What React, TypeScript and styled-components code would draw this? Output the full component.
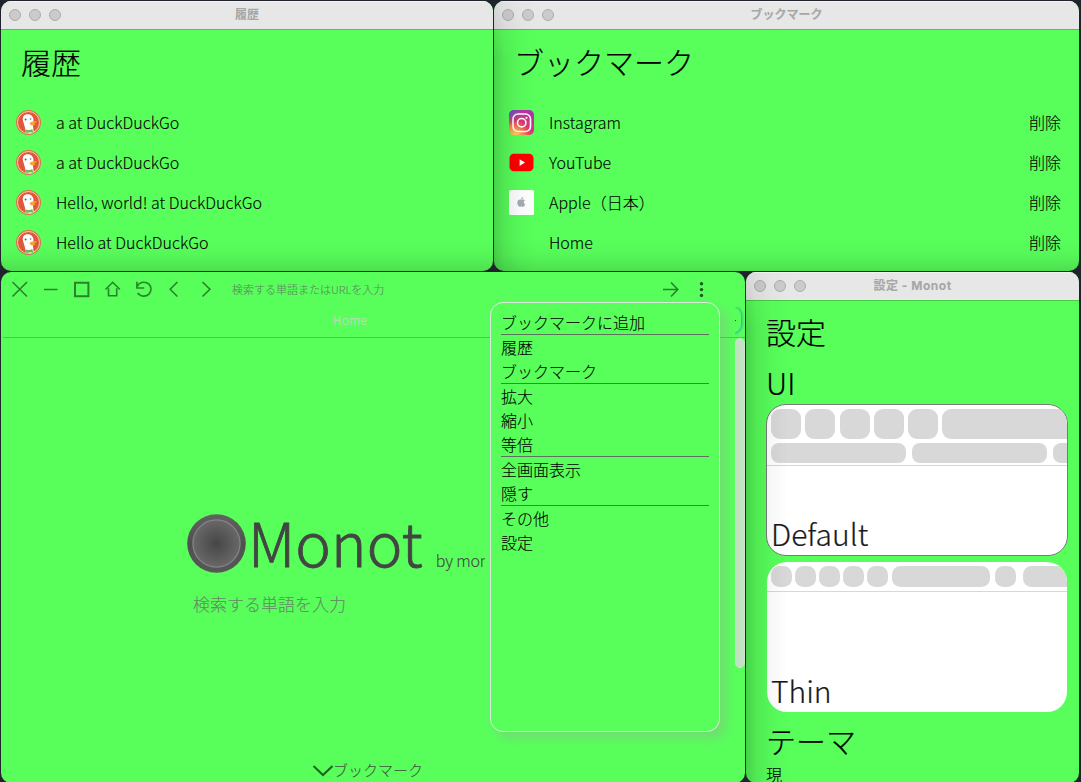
import React from 'react';
import styled, { createGlobalStyle, css } from 'styled-components';

const GREEN = '#58ff5b';

const GlobalStyle = createGlobalStyle`
  *, *::before, *::after { box-sizing: border-box; }
  html, body { margin: 0; padding: 0; }
  body {
    width: 1081px;
    height: 782px;
    overflow: hidden;
    background: #20222c;
    color: #000;
    font-family: "Noto Sans CJK JP", sans-serif;
    font-weight: 300;
    -webkit-text-stroke: 0.1px currentColor;
  }
`;

const Desktop = styled.div`
  width: 1081px;
  height: 782px;
  padding: 1px 2px 0 1px;
  display: flex;
  flex-direction: column;
  gap: 1px;
  overflow: hidden;
`;

const DesktopRow = styled.div<{ $height: number }>`
  display: flex;
  flex: none;
  gap: 1px;
  height: ${(p) => p.$height}px;
`;

const Window = styled.section<{ $width: number; $shade?: 'left' | 'bottom' | 'both' }>`
  flex: none;
  width: ${(p) => p.$width}px;
  height: 100%;
  display: flex;
  flex-direction: column;
  overflow: hidden;
  border-radius: 10px;
  background: ${GREEN};
  position: relative;

  &::after {
    content: '';
    position: absolute;
    inset: 0;
    pointer-events: none;
    background:
      ${(p) => p.$shade === 'bottom' || p.$shade === 'both'
        ? 'linear-gradient(to top, rgba(0,0,0,0.12), rgba(0,0,0,0.03) 16px, transparent 32px)'
        : 'linear-gradient(transparent, transparent)'},
      ${(p) => p.$shade === 'left' || p.$shade === 'both'
        ? 'linear-gradient(to right, rgba(0,0,0,0.18), rgba(0,0,0,0.09) 10px, rgba(0,0,0,0.03) 24px, transparent 42px)'
        : 'linear-gradient(transparent, transparent)'};
    -webkit-mask-image: ${(p) => (p.$shade === 'left' || p.$shade === 'both'
      ? 'linear-gradient(to bottom, rgba(0,0,0,0.3), #000 60px)'
      : 'none')};
  }
`;

const TitleBar = styled.header`
  flex: none;
  height: 29px;
  display: grid;
  grid-template-columns: 68px 1fr 68px;
  align-items: center;
  padding-bottom: 1px;
  background: #e7e7e7;
  border-top: 1px solid #f4f4f4;
  border-bottom: 1px solid #45cb45;
`;

const Lights = styled.div`
  display: flex;
  gap: 8px;
  padding-left: 8px;
`;

const Light = styled.span`
  width: 12px;
  height: 12px;
  border-radius: 50%;
  background: #cbcbcb;
  border: 1px solid #adadad;
`;

const WindowTitle = styled.div<{ $spacing?: number }>`
  text-align: center;
  font-family: Inter, "Noto Sans CJK JP", sans-serif;
  font-size: 12px;
  line-height: 20px;
  font-weight: 700;
  letter-spacing: ${(p) => p.$spacing ?? 0}px;
  color: #a6a8a8;
`;

const PageTitle = styled.h1<{ $indent: number }>`
  flex: none;
  margin: 8px 0 18px;
  padding-left: ${(p) => p.$indent}px;
  font-size: 30px;
  line-height: 46px;
  font-weight: 300;
  -webkit-text-stroke: 0.2px currentColor;
`;

const SiteRow = styled.div`
  flex: none;
  height: 40px;
  padding: 0 18px 0 15px;
  display: flex;
  align-items: center;
  font-size: 16px;
  line-height: 24px;
`;

const SiteIcon = styled.span`
  flex: none;
  width: 25px;
  height: 25px;
  margin-right: 15px;

  svg { display: block; width: 25px; height: 25px; }
`;

const SiteName = styled.span`
  flex: 1;
  white-space: nowrap;
`;

const DeleteButton = styled.button`
  border: 0;
  padding: 0;
  background: none;
  font: inherit;
  color: inherit;
`;

const Toolbar = styled.div`
  flex: none;
  height: 34px;
  display: flex;
  align-items: center;
  padding-left: 7px;
`;

const ToolButton = styled.button`
  flex: none;
  width: 31px;
  height: 22px;
  padding: 0;
  border: 0;
  background: none;
  color: #2a822a;

  svg { display: block; width: 22px; height: 22px; }
`;

const AddressField = styled.div`
  width: 434px;
  padding-left: 7px;
  font-size: 11px;
  line-height: 16px;
  color: #5b8a5b;
`;

const TabStrip = styled.div`
  flex: none;
  height: 32px;
  margin-left: 2px;
  display: flex;
  justify-content: space-between;
  align-items: flex-end;
  border-bottom: 1px solid #96a058;
`;

const Tab = styled.div`
  width: 694px;
  padding-bottom: 8px;
  text-align: center;
  font-size: 12px;
  letter-spacing: 0.4px;
  line-height: 18px;
  color: #b4deb4;
  -webkit-text-stroke: 0.3px currentColor;
`;

const NewTab = styled.div`
  position: relative;
  width: 10px;
  height: 30px;
  overflow: hidden;

  &::before {
    content: '';
    position: absolute;
    right: 3px;
    top: -1px;
    width: 28px;
    height: 28px;
    border-radius: 10px;
    border: 1px solid #38c49e;
    box-shadow: 0 0 3px #2690aa;
  }
  &::after {
    content: '';
    position: absolute;
    left: 0;
    top: 13px;
    width: 1px;
    height: 1px;
    background: #163f16;
  }
`;

const Viewport = styled.main`
  position: relative;
  flex: 1;
  min-height: 0;
  display: flex;
  justify-content: space-between;
`;

const StartPage = styled.div`
  width: 484px;
  overflow: hidden;
  display: flex;
  flex-direction: column;
  padding-top: 159px;
`;

const Brand = styled.div`
  display: flex;
  align-items: center;
  height: 88px;
  padding-left: 186px;
  white-space: nowrap;
  color: #424542;
`;

const BrandMark = styled.svg`
  flex: none;
  width: 59px;
  height: 59px;
  margin: 5px 2px 0 0;
`;

const BrandName = styled.span`
  font-size: 60px;
  line-height: 88px;
  letter-spacing: 0.1px;
  -webkit-text-stroke: 0.8px currentColor;
`;

const BrandAuthor = styled.span`
  padding-left: 13px;
  padding-top: 37px;
  font-size: 16px;
  line-height: 24px;
  letter-spacing: -0.2px;
`;

const SearchHint = styled.div`
  padding: 6px 0 0 192px;
  font-size: 17px;
  line-height: 26px;
  color: #648a64;
`;

const BookmarkToggle = styled.div`
  display: flex;
  align-items: center;
  margin-top: 141px;
  padding-left: 310px;
  white-space: nowrap;
  font-size: 15px;
  line-height: 24px;
  color: #3e533e;

  svg { flex: none; width: 22px; height: 22px; color: #216121; }
`;

const ScrollThumb = styled.div`
  width: 10px;
  height: 330px;
  border: 1px solid #d6dfd6;
  border-radius: 5px;
  background: #c1e3c1;
`;

const Menu = styled.nav`
  position: absolute;
  left: 489px;
  top: 30px;
  width: 230px;
  height: 430px;
  padding: 7px 10px;
  border: 1px solid #dbe8db;
  border-radius: 13px;
  background: ${GREEN};
  box-shadow: 6px 6px 12px rgba(165, 145, 165, 0.32);
  z-index: 1;
`;

const MenuItem = styled.div<{ $divided?: boolean }>`
  height: 24px;
  font-size: 16px;
  line-height: 25px;
  ${(p) => p.$divided && css`
    height: 25px;
    border-bottom: 1px solid #5d725d;
  `}
`;

const Settings = styled.div`
  display: flex;
  flex-direction: column;
  padding: 7px 11px 0 20px;
`;

const Heading = styled.h2<{ $height: number }>`
  margin: 0;
  height: ${(p) => p.$height}px;
  font-size: 30px;
  line-height: 46px;
  font-weight: 300;
  white-space: nowrap;
  -webkit-text-stroke: 0.2px currentColor;
`;

const ThemeCard = styled.div<{ $selected?: boolean }>`
  flex: none;
  display: flex;
  flex-direction: column;
  justify-content: space-between;
  width: ${(p) => (p.$selected ? 302 : 300)}px;
  height: ${(p) => (p.$selected ? 152 : 150)}px;
  margin: ${(p) => (p.$selected ? '0 0 6px' : '0 0 5px 1px')};
  border: ${(p) => (p.$selected ? '1px solid #777d77' : '0')};
  border-radius: 20px;
  background: #fff;
  overflow: hidden;
`;

const PreviewChrome = styled.div<{ $height: number }>`
  height: ${(p) => p.$height}px;
  padding: 4px 0 0 4px;
  border-bottom: 1px solid #d7d7d7;
  display: flex;
  flex-direction: column;
  gap: 4px;
`;

const PreviewRow = styled.div<{ $gap: number }>`
  display: flex;
  gap: ${(p) => p.$gap}px;
`;

const PreviewBlock = styled.span<{ $width: number; $height: number; $before?: number }>`
  flex: none;
  width: ${(p) => p.$width}px;
  height: ${(p) => p.$height}px;
  margin-left: ${(p) => p.$before ?? 0}px;
  border-radius: ${(p) => (p.$height === 30 ? 9 : p.$height / 2 - 2)}px;
  background: #d8d8d8;
`;

const CardLabel = styled.div`
  padding-left: 4px;
  height: 44px;
  font-size: 30px;
  line-height: 45px;
  color: #1a1a1a;
  -webkit-text-stroke: 0.2px currentColor;
`;

const ThemeNote = styled.div`
  font-size: 16px;
  line-height: 22px;
`;

const DuckIcon = () => (
  <svg viewBox="0 0 25 25">
    <circle cx="12.5" cy="12.5" r="12.5" fill="#e0714f" />
    <circle cx="12.5" cy="12.5" r="11" fill="#df5938" stroke="#f6cdb8" strokeWidth="1" />
    <path d="M10 22.6C9.4 18.600 8 14.500 7 10.800 6.200 7.600 7.200 5 9.800 4.400c3.600-1 7.200.8 7.700 4.800.2 2.400-.8 4-.6 6.200l.9 7-3.400 1z" fill="#fff" />
    <path d="M13.800 12.800c2-1.600 4.400-1.900 7.400-1.300-.9 1.300-2.400 1.500-3.700 1.900l2.300.6c-1.500 1.900-5.200 1.700-6-.2z" fill="#f7a833" />
    <path d="m9.800 19.400 2.800.9 3.800-1.100.9 3.500-3.200-.5-3.600.7z" fill="#65bc46" />
    <circle cx="9.600" cy="9.600" r="1" fill="#456b92" />
    <circle cx="14.600" cy="9" r=".8" fill="#456b92" />
  </svg>
);

const InstagramIcon = () => (
  <svg viewBox="0 0 25 25">
    <defs>
      <linearGradient id="ig-base" x1="0" y1="1" x2="1" y2="0">
        <stop offset="0" stopColor="#ff9b32" />
        <stop offset=".4" stopColor="#f03a5e" />
        <stop offset="1" stopColor="#a330c4" />
      </linearGradient>
      <radialGradient id="ig-warm" cx=".26" cy="1.02" r=".6">
        <stop offset="0" stopColor="#ffdc5c" />
        <stop offset="1" stopColor="#ffaf45" stopOpacity="0" />
      </radialGradient>
      <radialGradient id="ig-blue" cx="0" cy="0" r=".65">
        <stop offset="0" stopColor="#3e62df" />
        <stop offset="1" stopColor="#8847cc" stopOpacity="0" />
      </radialGradient>
    </defs>
    <rect width="25" height="25" rx="5" fill="url(#ig-base)" />
    <rect width="25" height="25" rx="5" fill="url(#ig-warm)" />
    <rect width="25" height="25" rx="5" fill="url(#ig-blue)" />
    <rect x="4" y="4" width="17.5" height="17.5" rx="5" fill="none" stroke="#fff" strokeWidth="1.6" />
    <circle cx="12.7" cy="12.7" r="4.2" fill="none" stroke="#fff" strokeWidth="1.6" />
    <circle cx="17.5" cy="7.8" r="1.1" fill="#fff" />
  </svg>
);

const YouTubeIcon = () => (
  <svg viewBox="0 0 25 25">
    <rect x=".5" y="3.8" width="24" height="17.5" rx="4.5" fill="#f00" />
    <path d="M10.6 9.3v6.6l5.4-3.3z" fill="#fff" />
  </svg>
);

const AppleIcon = () => (
  <svg viewBox="0 0 25 25">
    <rect width="25" height="25" rx="1.5" fill="#fff" />
    <path d="M15.9 10.2c-1.6.9-1.5 3.2.3 4-.4 1.3-1.2 2.600-2.100 2.600-.7 0-.9-.4-1.700-.4s-1 .4-1.700.4c-1.100 0-2.400-2.200-2.400-4.100 0-3 2.400-3.800 4.100-2.900 1.200-.6 2.700-.6 3.500.4zM12.300 9.400c-.1-1.100.8-2.200 1.900-2.400.1 1.200-.8 2.300-1.900 2.400z" fill="#a5adb5" />
  </svg>
);

type GlyphName = 'close' | 'minus' | 'square' | 'home' | 'reload' | 'back' | 'forward' | 'go' | 'more' | 'down';

const glyphs: Record<GlyphName, React.ReactNode> = {
  close: <path d="m4.500 4 14.500 14.500M19 4 4.500 18.500" />,
  minus: <path d="M5 11.500h13.500" />,
  square: <path d="M5 4.800h13.400v13.400H5z" strokeWidth="2" />,
  home: <path d="m4.500 11.500 7.200-7.200 7.200 7.200M7.500 10.200v7.600h8.200v-7.600" />,
  reload: (
    <>
      <path d="M4.900 3.800v6.200h7.300" />
      <path d="M5.300 8.400C6.600 5.600 9 4.300 11.900 4.300c4.100 0 7.100 2.800 7.100 6.800s-3 7-7.100 7c-2.600 0-4.700-1-6.200-3.100" />
    </>
  ),
  back: <path d="m14.400 4-7.200 7.300 7.200 7.200" />,
  forward: <path d="m8.500 4 7.400 7.300-7.400 7.200" />,
  go: <path d="M4 11.500h14.500M12 4.500l6.800 7-6.800 7" />,
  more: (
    <g fill="#1d551d" stroke="none">
      <circle cx="11.500" cy="5.800" r="1.700" />
      <circle cx="11.500" cy="11.600" r="1.700" />
      <circle cx="11.500" cy="17.400" r="1.700" />
    </g>
  ),
  down: <path d="m2.500 7 9.500 9 9.500-9" strokeWidth="2" />,
};

const Glyph = ({ name }: { name: GlyphName }) => (
  <svg viewBox="0 0 22 22" fill="none" stroke="currentColor" strokeWidth="1.6">
    {glyphs[name]}
  </svg>
);

const MonotMark = () => (
  <BrandMark viewBox="0 0 59 59">
    <defs>
      <radialGradient id="mark-core">
        <stop offset="0" stopColor="#464646" />
        <stop offset="1" stopColor="#686868" />
      </radialGradient>
      <linearGradient id="mark-rim" x2="0" y2="1">
        <stop offset="0" stopColor="#626262" />
        <stop offset=".5" stopColor="#505050" />
        <stop offset="1" stopColor="#575757" />
      </linearGradient>
    </defs>
    <circle cx="29.5" cy="29.5" r="29.3" fill="url(#mark-rim)" />
    <circle cx="29.5" cy="29.5" r="23.6" fill="url(#mark-core)" stroke="#858585" strokeWidth="1.2" />
  </BrandMark>
);

const MacTitleBar = ({ title, spacing }: { title: string; spacing?: number }) => (
  <TitleBar>
    <Lights><Light /><Light /><Light /></Lights>
    <WindowTitle $spacing={spacing}>{title}</WindowTitle>
  </TitleBar>
);

const historyItems = ['a at DuckDuckGo', 'a at DuckDuckGo', 'Hello, world! at DuckDuckGo', 'Hello at DuckDuckGo'];

const bookmarks = [
  { name: 'Instagram', icon: <InstagramIcon /> },
  { name: 'YouTube', icon: <YouTubeIcon /> },
  { name: 'Apple（日本）', icon: <AppleIcon /> },
  { name: 'Home', icon: null },
];

const navigation: GlyphName[] = ['close', 'minus', 'square', 'home', 'reload', 'back', 'forward'];

const menuItems = [
  { label: 'ブックマークに追加', divided: true },
  { label: '履歴' },
  { label: 'ブックマーク', divided: true },
  { label: '拡大' },
  { label: '縮小' },
  { label: '等倍', divided: true },
  { label: '全画面表示' },
  { label: '隠す', divided: true },
  { label: 'その他' },
  { label: '設定' },
];

const HistoryWindow = () => (
  <Window $width={492} $shade="bottom">
    <MacTitleBar title="履歴" />
    <PageTitle $indent={20}>履歴</PageTitle>
    {historyItems.map((name, i) => (
      <SiteRow key={i}>
        <SiteIcon><DuckIcon /></SiteIcon>
        <SiteName>{name}</SiteName>
      </SiteRow>
    ))}
  </Window>
);

const BookmarkWindow = () => (
  <Window $width={585} $shade="both">
    <MacTitleBar title="ブックマーク" />
    <PageTitle $indent={20}>ブックマーク</PageTitle>
    {bookmarks.map((item) => (
      <SiteRow key={item.name}>
        <SiteIcon>{item.icon}</SiteIcon>
        <SiteName>{item.name}</SiteName>
        <DeleteButton>削除</DeleteButton>
      </SiteRow>
    ))}
  </Window>
);

const BrowserWindow = () => (
  <Window $width={744}>
    <Toolbar>
      {navigation.map((name) => (
        <ToolButton key={name}><Glyph name={name} /></ToolButton>
      ))}
      <AddressField>検索する単語またはURLを入力</AddressField>
      <ToolButton><Glyph name="go" /></ToolButton>
      <ToolButton><Glyph name="more" /></ToolButton>
    </Toolbar>
    <TabStrip>
      <Tab>Home</Tab>
      <NewTab />
    </TabStrip>
    <Viewport>
      <StartPage>
        <Brand>
          <MonotMark />
          <BrandName>Monot</BrandName>
          <BrandAuthor>by mon</BrandAuthor>
        </Brand>
        <SearchHint>検索する単語を入力</SearchHint>
        <BookmarkToggle><Glyph name="down" />ブックマーク</BookmarkToggle>
      </StartPage>
      <ScrollThumb />
    </Viewport>
    <Menu>
      {menuItems.map((item) => (
        <MenuItem key={item.label} $divided={item.divided}>{item.label}</MenuItem>
      ))}
    </Menu>
  </Window>
);

const SettingsWindow = () => (
  <Window $width={333} $shade="left">
    <MacTitleBar title="設定 - Monot" spacing={0.5} />
    <Settings>
      <Heading $height={51}>設定</Heading>
      <Heading $height={45}>UI</Heading>
      <ThemeCard $selected>
        <PreviewChrome $height={61}>
          <PreviewRow $gap={4.25}>
            {[0, 1, 2, 3, 4].map((i) => <PreviewBlock key={i} $width={30} $height={30} />)}
            <PreviewBlock $width={140} $height={30} />
          </PreviewRow>
          <PreviewRow $gap={6}>
            <PreviewBlock $width={135} $height={20} />
            <PreviewBlock $width={135} $height={20} />
            <PreviewBlock $width={135} $height={20} />
          </PreviewRow>
        </PreviewChrome>
        <CardLabel>Default</CardLabel>
      </ThemeCard>
      <ThemeCard>
        <PreviewChrome $height={30}>
          <PreviewRow $gap={3}>
            {[0, 1, 2, 3, 4].map((i) => <PreviewBlock key={i} $width={21} $height={21} />)}
            <PreviewBlock $width={98} $height={21} $before={1} />
            <PreviewBlock $width={21} $height={21} $before={2} />
            <PreviewBlock $width={80} $height={21} $before={4} />
          </PreviewRow>
        </PreviewChrome>
        <CardLabel>Thin</CardLabel>
      </ThemeCard>
      <Heading $height={46}>テーマ</Heading>
      <ThemeNote>現</ThemeNote>
    </Settings>
  </Window>
);

export default function App() {
  return (
    <>
      <GlobalStyle />
      <Desktop>
        <DesktopRow $height={270}>
          <HistoryWindow />
          <BookmarkWindow />
        </DesktopRow>
        <DesktopRow $height={511}>
          <BrowserWindow />
          <SettingsWindow />
        </DesktopRow>
      </Desktop>
    </>
  );
}
